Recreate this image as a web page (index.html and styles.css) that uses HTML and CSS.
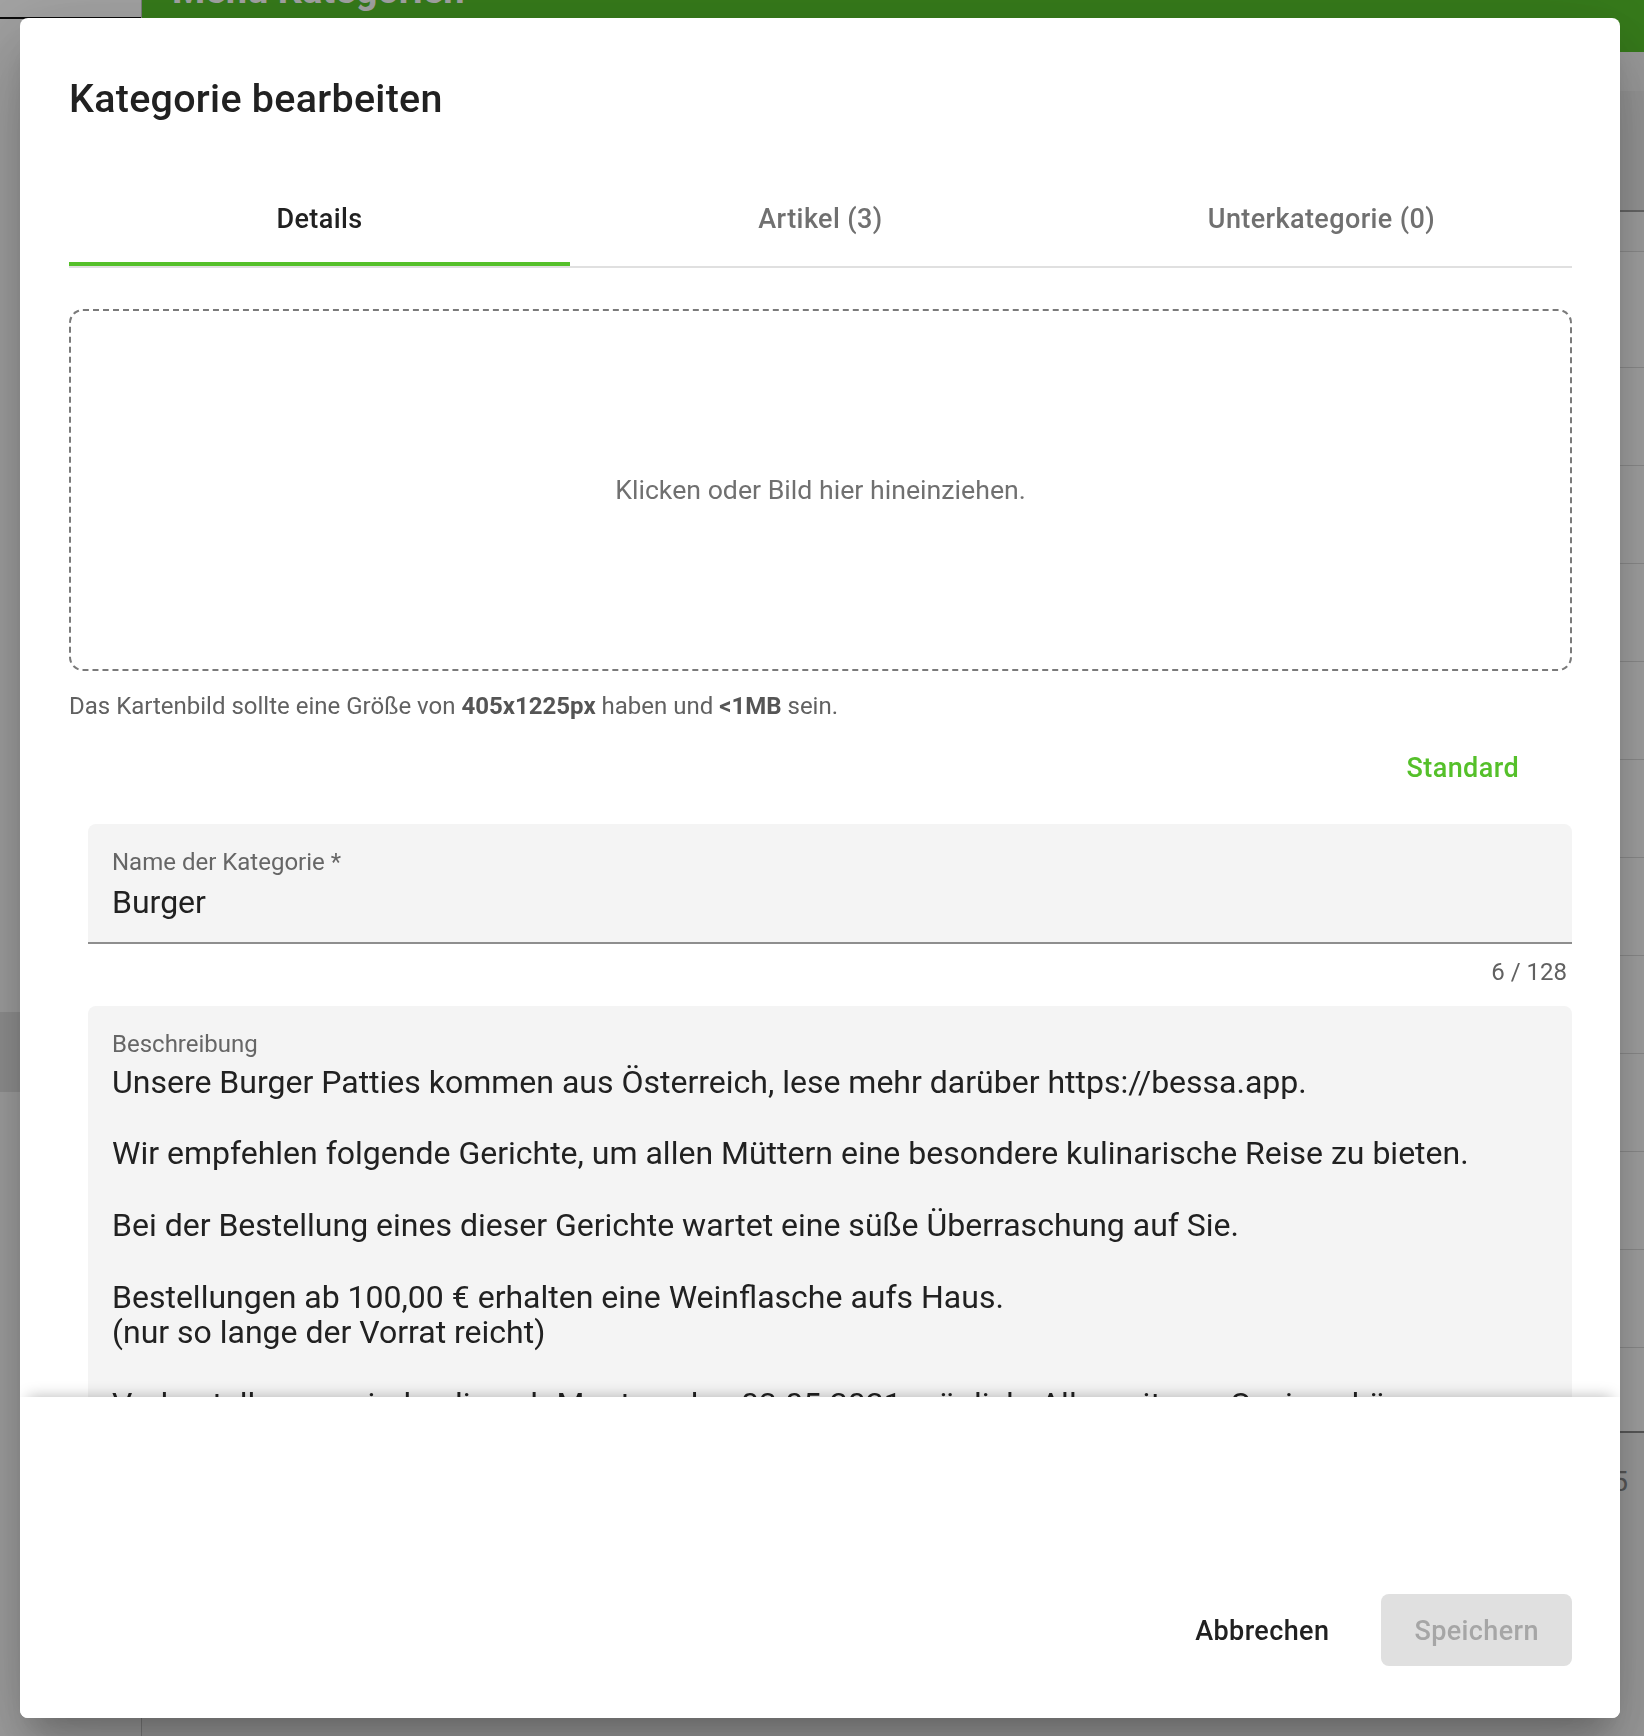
FILE: index.html
```html
<!DOCTYPE html>
<html lang="de">
<head>
<meta charset="utf-8">
<title>Kategorie bearbeiten</title>
<link rel="stylesheet" href="styles.css">
</head>
<body>
<div class="page">
  <aside class="sidebar">
    <div class="sidebar-top"></div>
    <nav class="nav">
      <div class="nav-item"></div>
    </nav>
  </aside>
  <main class="main">
    <header class="appbar"><h1 class="appbar-title">Menü Kategorien</h1></header>
    <div class="toolbar"></div>
    <div class="table">
      <div class="thead"></div>
      <div class="row row-sub"></div>
      <div class="row row-first"></div>
      <div class="row"></div>
      <div class="row"></div>
      <div class="row"></div>
      <div class="row"></div>
      <div class="row"></div>
      <div class="row"></div>
      <div class="row"></div>
      <div class="row"></div>
      <div class="row"></div>
      <div class="row"></div>
      <div class="row row-last"></div>
    </div>
    <div class="pagination">Zeilen pro Seite: 5</div>
  </main>
</div>
<div class="scrim"></div>
<div class="dialog" role="dialog">
  <h2 class="dialog-title">Kategorie bearbeiten</h2>
  <div class="dialog-content">
    <div class="tabs">
      <div class="tab active">Details<span class="indicator"></span></div>
      <div class="tab">Artikel (3)</div>
      <div class="tab">Unterkategorie (0)</div>
    </div>
    <div class="dropzone">Klicken oder Bild hier hineinziehen.</div>
    <p class="hint">Das Kartenbild sollte eine Größe von <b>405x1225px</b> haben und <b>&lt;1MB</b> sein.</p>
    <div class="std-row"><button class="btn btn-standard">Standard</button></div>
    <div class="field">
      <div class="field-label">Name der Kategorie *</div>
      <div class="field-value">Burger</div>
    </div>
    <div class="counter">6 / 128</div>
    <div class="field field-multi">
      <div class="field-label">Beschreibung</div>
      <div class="field-value">Unsere Burger Patties kommen aus Österreich, lese mehr darüber https://bessa.app.<br><br>Wir empfehlen folgende Gerichte, um allen Müttern eine besondere kulinarische Reise zu bieten.<br><br>Bei der Bestellung eines dieser Gerichte wartet eine süße Überraschung auf Sie.<br><br>Bestellungen ab 100,00 € erhalten eine Weinflasche aufs Haus.<br>(nur so lange der Vorrat reicht)<br><br>Vorbestellungen sind online ab Montag, den 03.05.2021 möglich. Alle weiteren Speisen können<br>wie gewohnt bestellt werden.</div>
    </div>
  </div>
  <div class="dialog-actions">
    <button class="btn btn-cancel">Abbrechen</button>
    <button class="btn btn-save" disabled>Speichern</button>
  </div>
</div>
</body>
</html>
```
FILE: styles.css
```css
* { box-sizing: border-box; }
html, body { margin: 0; padding: 0; }
body {
  width: 1644px;
  height: 1736px;
  overflow: hidden;
  font-family: Roboto, "Liberation Sans", Arial, sans-serif;
  color: #212121;
  background: #fff;
}

/* background page */
.page { display: flex; height: 1736px; }
.sidebar {
  width: 142px;
  flex: none;
  background: #fafafa;
  border-right: 1px solid #c4c4c4;
  display: flex;
  flex-direction: column;
}
.sidebar-top { height: 19px; background: #fff; border-bottom: 2px solid #111; }
.nav { padding-top: 993px; }
.nav-item { height: 80px; background: #e2e2e2; }
.main {
  flex: 1;
  min-width: 0;
  display: flex;
  flex-direction: column;
  background: #f4f4f4;
}
.appbar {
  height: 52px;
  flex: none;
  background: #55c02a;
  padding-left: 30px;
  overflow: hidden;
}
.appbar-title {
  margin: -29px 0 0;
  font-size: 38px;
  line-height: 38px;
  font-weight: 700;
  color: #fff;
}
.toolbar { height: 39px; flex: none; }
.table { background: #fff; flex: none; }
.thead { height: 121px; background: #ececec; border-bottom: 2px solid #a0a0a0; }
.row { height: 98px; border-bottom: 1px solid #dcdcdc; }
.row-sub { height: 40px; background: #fafafa; }
.row-first { height: 116px; }
.row-last { height: 85px; border-bottom: 2px solid #8c8c8c; }
.pagination {
  display: flex;
  justify-content: flex-end;
  padding: 29px 16px 0 0;
  font-size: 28px;
  line-height: 40px;
  color: #8a8a8a;
}
.scrim { position: fixed; inset: 0; background: rgba(0, 0, 0, .36); }

/* dialog */
.dialog {
  position: fixed;
  left: 20px;
  top: 18px;
  width: 1600px;
  height: 1700px;
  background: #fff;
  border-radius: 8px;
  display: flex;
  flex-direction: column;
  overflow: hidden;
  box-shadow: 0 21px 28px -13px rgba(0, 0, 0, .2), 0 46px 72px 6px rgba(0, 0, 0, .14), 0 17px 87px 15px rgba(0, 0, 0, .12);
}
.dialog-title {
  flex: none;
  height: 157px;
  margin: 0;
  padding: 51px 49px 0;
  font-size: 39.4px;
  line-height: 60.8px;
  font-weight: 500;
  letter-spacing: .3px;
  color: #212121;
}
.dialog-content {
  flex: 1;
  min-height: 0;
  overflow: hidden;
  padding: 0 48px 0 49px;
}
.tabs {
  display: grid;
  grid-template-columns: repeat(3, 1fr);
  height: 93px;
  border-bottom: 2px solid #e0e0e0;
}
.tab {
  position: relative;
  display: flex;
  align-items: center;
  justify-content: center;
  padding-bottom: 2px;
  font-size: 27px;
  line-height: 1.75;
  font-weight: 500;
  letter-spacing: .4px;
  color: #707070;
}
.tab.active { color: #212121; }
.indicator {
  position: absolute;
  left: 0;
  right: 0;
  bottom: 0;
  height: 4px;
  background: #55c02a;
}
.dropzone {
  margin-top: 41px;
  height: 362px;
  border: 2px dashed #7a7a7a;
  border-radius: 14px;
  display: flex;
  align-items: center;
  justify-content: center;
  font-size: 26.7px;
  color: #707070;
}
.hint {
  margin: 17px 0 0;
  font-size: 24px;
  line-height: 36px;
  color: #616161;
}
.hint b { font-weight: 700; color: #555; }
.std-row {
  display: flex;
  justify-content: flex-end;
  margin-top: 10px;
  padding-right: 38px;
}
.btn {
  font-family: inherit;
  border: 0;
  background: none;
  margin: 0;
  font-size: 27px;
  line-height: 1.75;
  font-weight: 500;
  letter-spacing: .4px;
  border-radius: 8px;
  padding: 11px 15px;
}
.btn-standard { color: #55c02a; }
.field {
  margin: 21px 0 0 19px;
  background: #f4f4f4;
  border-radius: 8px 8px 0 0;
  border-bottom: 2px solid #8e8e8e;
  padding: 26.5px 24px 22.6px;
}
.field-label {
  font-size: 24px;
  line-height: 23px;
  color: #666;
}
.field-value {
  margin-top: 10px;
  font-size: 32px;
  line-height: 36px;
  color: #212121;
}
.counter {
  margin: 9px 0 0 19px;
  padding-right: 5px;
  text-align: right;
  font-size: 24px;
  line-height: 38px;
  color: #616161;
}
.field-multi { margin-top: 15px; border-bottom: 0; padding-bottom: 0; }
.field-multi .field-value { margin-top: 9px; line-height: 35.8px; }
.dialog-actions {
  position: relative;
  flex: none;
  height: 321px;
  display: flex;
  justify-content: flex-end;
  align-items: flex-end;
  gap: 22px;
  padding: 0 48px 52px;
  background: #fff;
  box-shadow: 0 -8px 14px -8px rgba(0, 0, 0, .28);
}
.btn-cancel { color: #212121; padding: 14px 30px 10.8px; }
.btn-save { background: #e0e0e0; color: #a6a6a6; padding: 14px 33px 10.8px; }
```
